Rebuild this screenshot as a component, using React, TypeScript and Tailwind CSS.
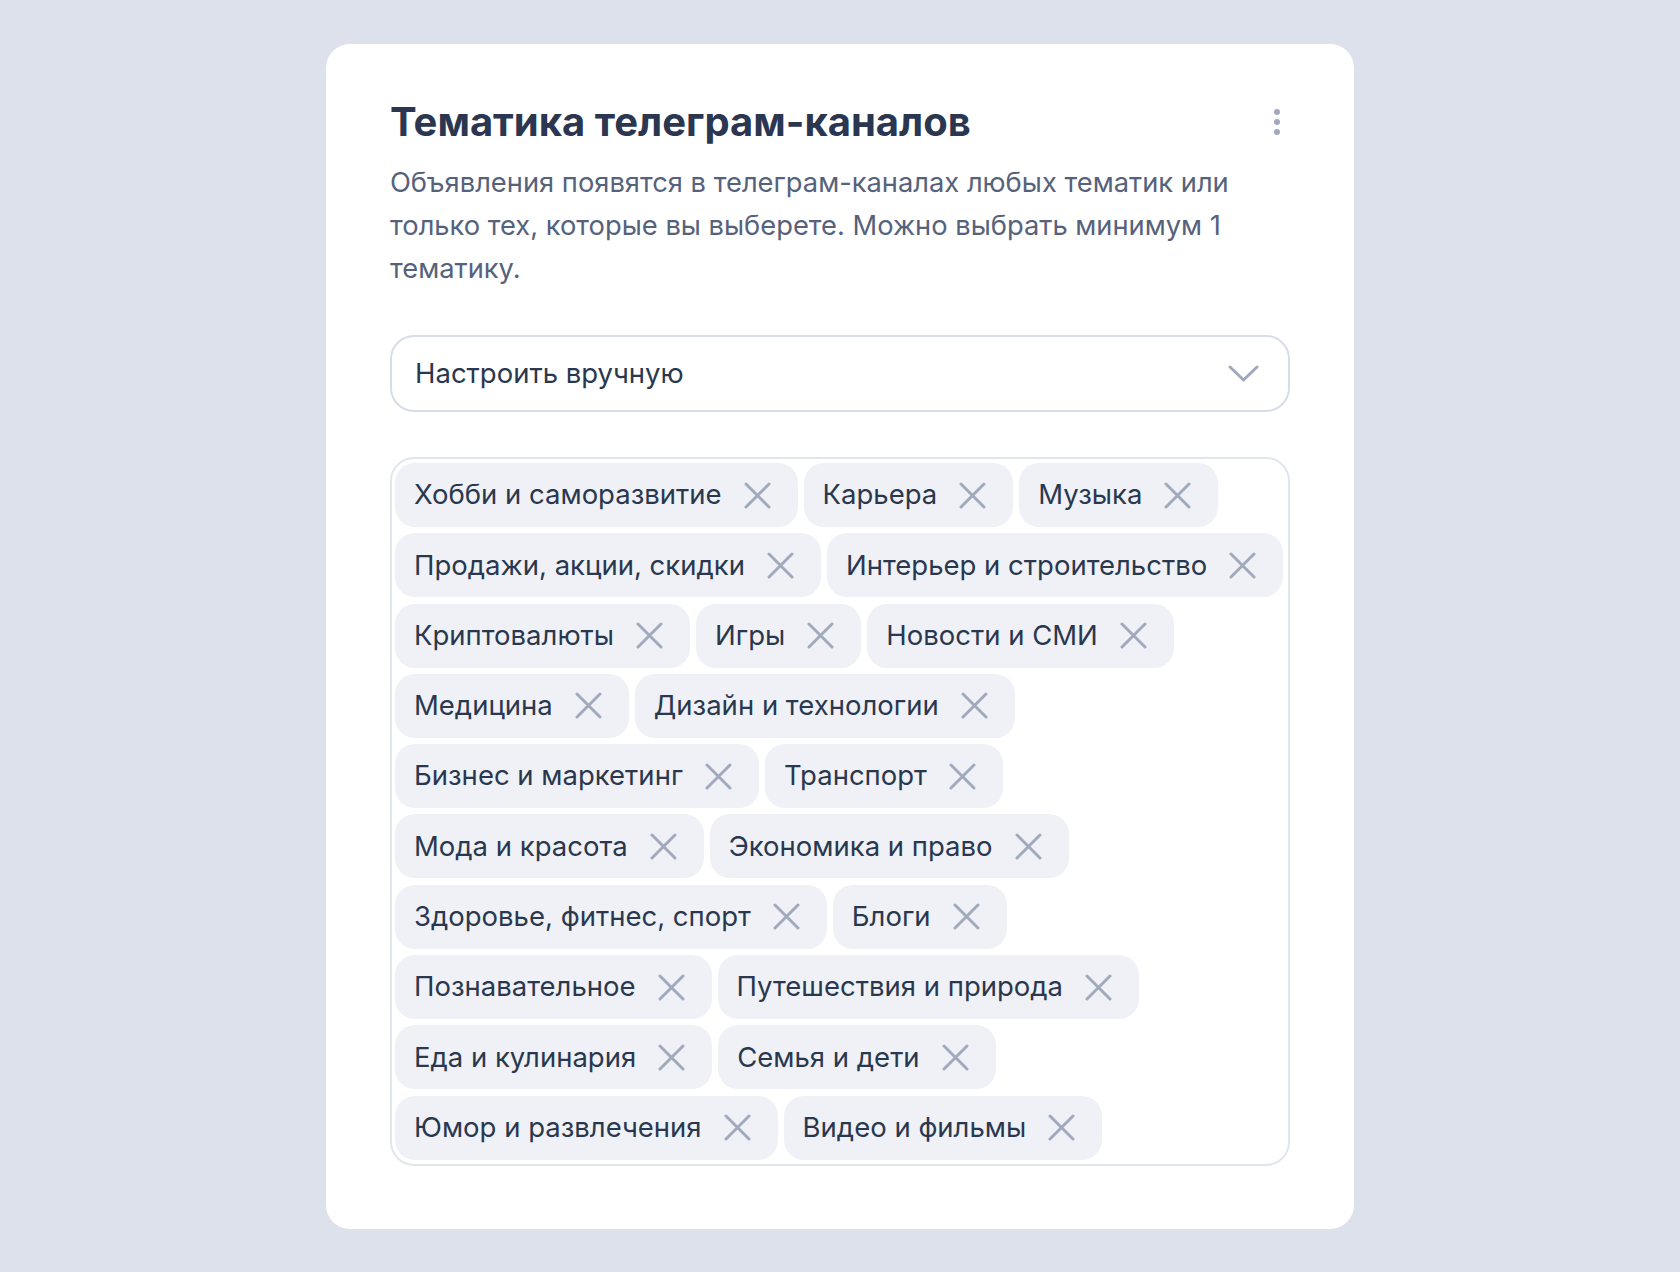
import React from "react";

const rows: string[][] = [
  ["Хобби и саморазвитие", "Карьера", "Музыка"],
  ["Продажи, акции, скидки", "Интерьер и строительство"],
  ["Криптовалюты", "Игры", "Новости и СМИ"],
  ["Медицина", "Дизайн и технологии"],
  ["Бизнес и маркетинг", "Транспорт"],
  ["Мода и красота", "Экономика и право"],
  ["Здоровье, фитнес, спорт", "Блоги"],
  ["Познавательное", "Путешествия и природа"],
  ["Еда и кулинария", "Семья и дети"],
  ["Юмор и развлечения", "Видео и фильмы"],
];

function CloseIcon() {
  return (
    <svg width="27" height="27" viewBox="0 0 27 27" fill="none" className="shrink-0">
      <path d="M2 2L25 25M25 2L2 25" stroke="#a1a9bd" strokeWidth="3" strokeLinecap="round" />
    </svg>
  );
}

function Tag({ label }: { label: string }) {
  return (
    <div className="flex h-[64px] items-center rounded-[20px] bg-[#eff1f6] pl-[19px] pr-[27px]">
      <span className="whitespace-nowrap text-[27.5px] leading-none text-[#2a384f]">{label}</span>
      <span className="ml-[22px] flex items-center">
        <CloseIcon />
      </span>
    </div>
  );
}

export default function App() {
  return (
    <div className="flex min-h-screen justify-center bg-[#dce1ec] pt-[44px] pb-[44px] font-[Inter,sans-serif]">
      <div className="w-[1028px] rounded-[24px] bg-white px-[64px] pt-[54px] pb-[63px]">
        <div className="flex items-center justify-between">
          <h1 className="text-[40px] font-bold leading-[48px] text-[#2b3751]">
            Тематика телеграм-каналов
          </h1>
          <button className="flex h-[40px] w-[26px] flex-col items-center justify-center gap-[4.5px]">
            <span className="h-[5.5px] w-[5.5px] rounded-full bg-[#a1a9bd]" />
            <span className="h-[5.5px] w-[5.5px] rounded-full bg-[#a1a9bd]" />
            <span className="h-[5.5px] w-[5.5px] rounded-full bg-[#a1a9bd]" />
          </button>
        </div>

        <p className="mt-[15px] text-[27.3px] leading-[43px] text-[#56627c]">
          Объявления появятся в телеграм-каналах любых тематик или
          <br />
          только тех, которые вы выберете. Можно выбрать минимум 1
          <br />
          тематику.
        </p>

        <button className="mt-[45px] flex h-[77px] w-full items-center justify-between rounded-[24px] border-2 border-[#d8dce7] pl-[23px] pr-[29px]">
          <span className="text-[27.5px] text-[#2a384f]">Настроить вручную</span>
          <svg width="31" height="17" viewBox="0 0 31 17" fill="none">
            <path d="M2 2L15.5 15L29 2" stroke="#a1a9bd" strokeWidth="3" strokeLinecap="round" strokeLinejoin="round" />
          </svg>
        </button>

        <div className="mt-[45px] flex flex-col gap-[6.3px] rounded-[24px] border-2 border-[#e1e5ee] px-[3px] pt-[4px] pb-[4px]">
          {rows.map((row, i) => (
            <div key={i} className="flex gap-[6px]">
              {row.map((t) => (
                <Tag key={t} label={t} />
              ))}
            </div>
          ))}
        </div>
      </div>
    </div>
  );
}
